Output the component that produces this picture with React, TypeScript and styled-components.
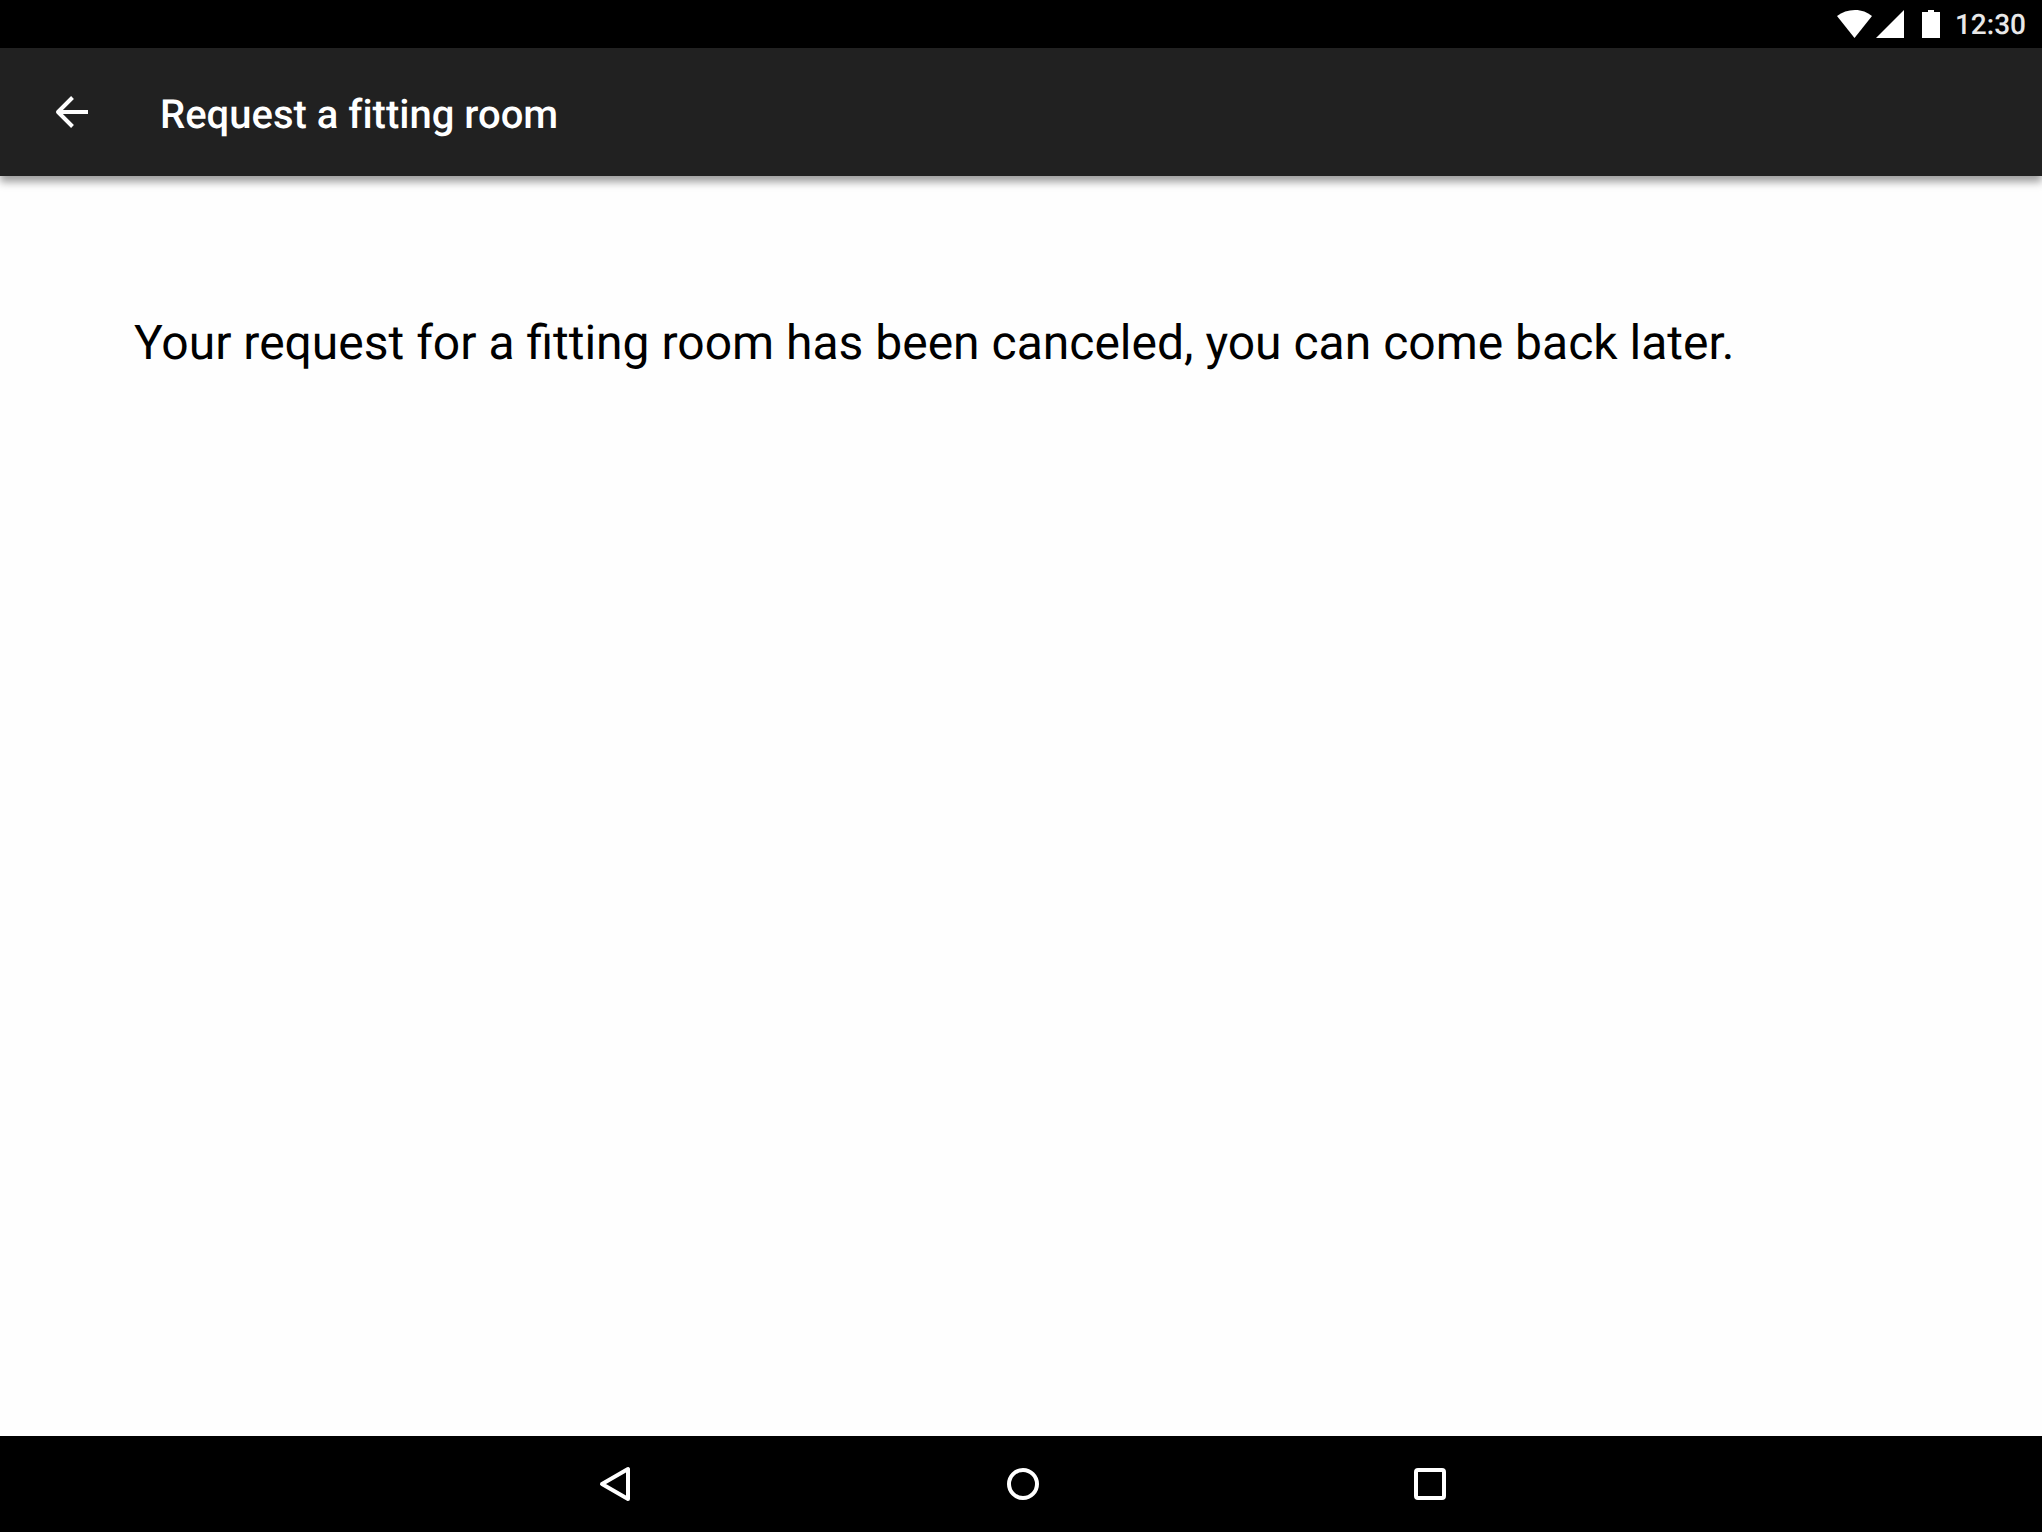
import React from 'react';
import styled, { createGlobalStyle } from 'styled-components';

const GlobalStyle = createGlobalStyle`
  *, *::before, *::after { box-sizing: border-box; }
  body { margin: 0; background: #fefefe; }
`;

const Screen = styled.div`
  display: flex;
  flex-direction: column;
  min-height: 100vh;
  overflow-x: hidden;
  font-family: Roboto, sans-serif;
  text-rendering: geometricPrecision;
  background: #fefefe;
  color: #000;
`;

const StatusBar = styled.div`
  display: flex;
  align-items: center;
  justify-content: flex-end;
  height: 48px;
  padding-right: 16px;
  background: #000;
  color: #fff;
`;

const StatusIcon = styled.svg<{ $width: number; $gap: number }>`
  display: block;
  width: ${({ $width }) => $width}px;
  height: 28px;
  margin-right: ${({ $gap }) => $gap}px;
  fill: currentColor;
`;

const Clock = styled.time`
  padding-top: 2px;
  font-size: 28px;
  font-weight: 500;
  line-height: 48px;
  color: #e8e8e8;
`;

const AppBar = styled.header`
  display: flex;
  align-items: center;
  gap: 48px;
  height: 128px;
  padding: 0 32px;
  background: #212121;
  color: #fff;
  box-shadow: 0 6px 8px rgba(0, 0, 0, 0.38);
`;

const IconButton = styled.button`
  display: flex;
  align-items: center;
  justify-content: center;
  width: 80px;
  height: 80px;
  padding: 0;
  border: 0;
  background: none;
  color: inherit;
  cursor: pointer;
`;

const Icon = styled.svg`
  display: block;
  width: 48px;
  height: 48px;
`;

const Title = styled.h1`
  margin: 0;
  padding-top: 6px;
  font-size: 40px;
  font-weight: 500;
  line-height: 48px;
  font-variant-ligatures: none;
`;

const Content = styled.main`
  flex: 1;
  padding: 137px 134px 64px;
`;

const Message = styled.p`
  margin: 0;
  font-size: 48px;
  line-height: 60px;
`;

const NavBar = styled.nav`
  display: flex;
  align-items: center;
  justify-content: center;
  gap: 327px;
  height: 96px;
  padding-left: 4px;
  background: #000;
  color: #fff;
`;

export default function App() {
  return (
    <Screen>
      <GlobalStyle />
      <StatusBar>
        <StatusIcon $width={36} $gap={3} viewBox="0 0 36 28" aria-label="Wi-Fi">
          <path d="M0 6C5 2.200 11 0 18 0s12 2.200 17 6L17.500 28z" />
        </StatusIcon>
        <StatusIcon $width={28} $gap={18} viewBox="0 0 28 28" aria-label="Signal">
          <path d="M28 0v28H0z" />
        </StatusIcon>
        <StatusIcon $width={18} $gap={15} viewBox="0 0 18 28" aria-label="Battery">
          <path d="M6 0h6v2h6v26H0V2h6z" />
        </StatusIcon>
        <Clock>12:30</Clock>
      </StatusBar>
      <AppBar>
        <IconButton type="button" aria-label="Navigate up">
          <Icon viewBox="0 0 48 48" fill="none" stroke="currentColor" strokeWidth="4" strokeLinejoin="round">
            <path d="M24.500 9.500L10 24l14.500 14.500M10 24h30" />
          </Icon>
        </IconButton>
        <Title>Request a fitting room</Title>
      </AppBar>
      <Content>
        <Message>Your request for a fitting room has been canceled, you can come back later.</Message>
      </Content>
      <NavBar aria-label="System">
        <IconButton type="button" aria-label="Back">
          <Icon viewBox="0 0 48 48" fill="none" stroke="currentColor" strokeWidth="4" strokeLinejoin="round">
            <path d="M36 9v30L10 24z" />
          </Icon>
        </IconButton>
        <IconButton type="button" aria-label="Home">
          <Icon viewBox="0 0 48 48" fill="none" stroke="currentColor" strokeWidth="4">
            <circle cx="24" cy="24" r="14" />
          </Icon>
        </IconButton>
        <IconButton type="button" aria-label="Recent apps">
          <Icon viewBox="0 0 48 48" fill="none" stroke="currentColor" strokeWidth="4">
            <rect x="10" y="10" width="28" height="28" rx="2" />
          </Icon>
        </IconButton>
      </NavBar>
    </Screen>
  );
}
